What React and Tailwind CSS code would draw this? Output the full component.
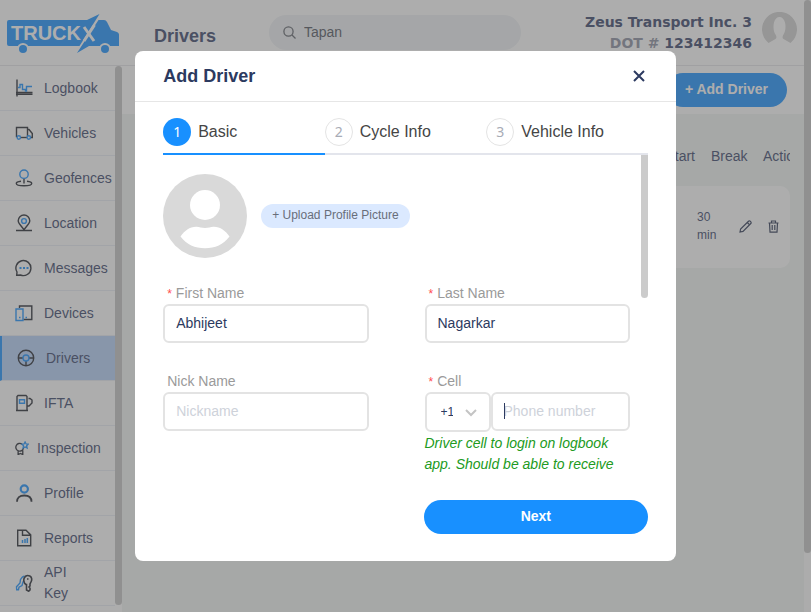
import React from "react";

const DARK = "#22262f";
const BLUE = "#1890ff";

function Icon({ size = 18, children }) {
  return (
    <svg width={size} height={size} viewBox="0 0 18 18" fill="none" stroke={DARK} strokeWidth="1.4" className="shrink-0" aria-hidden="true">
      {children}
    </svg>
  );
}

const icons = {
  logbook: (
    <Icon>
      <path d="M2 0.5v17M1 13.500h16.500M1 15.200h16.500" />
      <path d="M3 8.500h2V5.500h2.500v5h3v1.500h1V7.500H17" stroke={BLUE} />
    </Icon>
  ),
  vehicles: (
    <Icon>
      <path d="M2 12.500H1.500V3.500h11v9M12.500 5.500h1.500l3.300 4v4h-1.800" />
      <path d="M5.500 13.500h6.500" stroke={DARK} />
      <circle cx="3.800" cy="13.500" r="1.700" stroke={BLUE} />
      <circle cx="13.800" cy="13.500" r="1.700" stroke={BLUE} />
    </Icon>
  ),
  geofences: (
    <Icon>
      <path d="M9 9.500v5M6 12.300c-3 .300-4.700 1-4.700 2.200 0 1.300 3.200 2.200 7.700 2.200s7.700-.900 7.700-2.200c0-1.200-1.700-1.900-4.700-2.200" />
      <circle cx="9" cy="5.200" r="4.200" stroke={BLUE} />
    </Icon>
  ),
  location: (
    <Icon>
      <path d="M9 15.500C5.500 11.500 3.200 9.200 3.200 6.800a5.800 5.800 0 0 1 11.600 0c0 2.400-2.300 4.700-5.800 8.700zM1 16.500h16" />
      <circle cx="9" cy="7" r="2.400" stroke={BLUE} />
    </Icon>
  ),
  messages: (
    <Icon>
      <path d="M1.700 16.300L2 13A7.500 7.500 0 1 1 5.500 16z" />
      <path d="M4.500 9h2M8 9h2M11.500 9h2" stroke={BLUE} strokeWidth="2" />
    </Icon>
  ),
  devices: (
    <Icon>
      <path d="M4.500 4V2h12.300v13.500H8.500" />
      <path d="M1 5h7v11.500H1z" stroke={BLUE} />
      <path d="M4 13.500h1.500M10.500 13.500H12" stroke={BLUE} />
    </Icon>
  ),
  drivers: (
    <Icon>
      <circle cx="9" cy="9" r="7.700" />
      <path d="M1.500 9h4.500M12 9h4.500M9 12v4.500" />
      <circle cx="9" cy="9" r="3" stroke={BLUE} />
    </Icon>
  ),
  ifta: (
    <Icon>
      <path d="M2 16.500V2.500L3 1.500h8l1 1v14zM1 16.500h12M12 12h2l1.500-1.500L17 9V6l-2-1.500h-1.500" />
      <path d="M4.500 5.800h5v3.500h-5z" stroke={BLUE} />
    </Icon>
  ),
  inspection: (
    <Icon size={14}>
      <path d="M9 4A5 5 0 1 0 11 9M4 12v5.500l3-1.500 3 1.500V12" strokeWidth="1.700" />
      <path d="M13 1.200l1.300 2.600 2.700.300-2 2 .600 2.800L13 7.600l-2.600 1.300.600-2.800-2-2 2.700-.300z" stroke={BLUE} strokeWidth="1.700" />
    </Icon>
  ),
  profile: (
    <Icon>
      <path d="M2 17.800c0-4 2.500-6.300 7.300-6.300s7.200 2.300 7.200 6.300" strokeWidth="1.800" />
      <circle cx="9.300" cy="5" r="3.600" stroke={BLUE} strokeWidth="2.200" />
    </Icon>
  ),
  reports: (
    <Icon>
      <path d="M2.700 1.200h8.300l4.700 4.700v10.800h-13zM7.500 1.200v5h8" />
      <path d="M7.500 14v-3M10 14v-4M12.300 14V9" stroke={BLUE} strokeWidth="1.500" />
    </Icon>
  ),
  apiKey: (
    <Icon>
      <path d="M9 6.500L8 8l-1 3.500-3 1.700-.500 2.500H1.700l-.200-3L5 9l.500-3.500c1-2 2.500-3.300 4-3.500" stroke={BLUE} />
      <path d="M11 10.500C8.500 9 8.300 5.500 9.500 3.500S13 1.200 14.800 2s2.400 3.500 1.400 5.500l-1.200 2.500v2l-1 1 1 1v2l-1.300 1.200L11.500 16v-5.500zM12 5h1.500" strokeWidth="1.600" />
    </Icon>
  ),
};

const navItems = [
  { label: "Logbook", icon: "logbook" },
  { label: "Vehicles", icon: "vehicles" },
  { label: "Geofences", icon: "geofences" },
  { label: "Location", icon: "location" },
  { label: "Messages", icon: "messages" },
  { label: "Devices", icon: "devices" },
  { label: "Drivers", icon: "drivers", active: true },
  { label: "IFTA", icon: "ifta" },
  { label: "Inspection", icon: "inspection", compact: true },
  { label: "Profile", icon: "profile" },
  { label: "Reports", icon: "reports" },
  { label: "API Key", icon: "apiKey" },
];

function Logo() {
  return (
    <svg width="112" height="40" viewBox="7 14 112 40" className="shrink-0" role="img" aria-label="TruckX">
      <path d="M9 20h78l12.500-6-20 32H9a2 2 0 0 1-2-2V22a2 2 0 0 1 2-2z" fill={BLUE} />
      <path d="M98.500 20h5.500a4 4 0 0 1 3 2l4 8 6 2a3 3 0 0 1 2 3v11H89l-12 7z" fill={BLUE} />
      <text x="11" y="40" fontSize="20" fontWeight="700" fill="#fff" fontFamily="Liberation Sans, sans-serif">TRUCK</text>
      <path d="M84 27l10 14" stroke="#fff" strokeWidth="3" />
      <path d="M94.500 25L84 41" stroke="#fff" strokeWidth="3" />
      <circle cx="23" cy="49" r="6" fill="#fff" />
      <circle cx="105" cy="49" r="6" fill="#fff" />
      <circle cx="23" cy="49" r="4" fill={BLUE} />
      <circle cx="105" cy="49" r="4" fill={BLUE} />
    </svg>
  );
}

function Header() {
  return (
    <header className="flex h-[66px] items-start border-b border-[#e4e4e8] bg-white px-[7px]">
      <div className="pt-[14px]">
        <Logo />
      </div>
      <h1 className="mt-6 ml-[35px] w-[115px] text-lg leading-6 font-bold text-[#38446a]">Drivers</h1>
      <label className="mt-[15px] flex h-[35px] w-[252px] items-center gap-2 rounded-full bg-[#eef1f4] pl-[14px]">
        <svg width="13" height="13" viewBox="0 0 13 13" fill="none" stroke="#60646c" strokeWidth="1.3" aria-hidden="true">
          <circle cx="5.500" cy="5.500" r="4.600" />
          <path d="M9 9l3.500 3.500" />
        </svg>
        <input aria-label="Search drivers" defaultValue="Tapan" className="min-w-0 flex-1 bg-transparent pb-0.5 text-sm text-[#50555f] outline-none" />
      </label>
      <div className="mt-3 ml-auto text-right font-['DejaVu_Sans',sans-serif] text-sm leading-[21px] font-bold whitespace-nowrap text-[#38446a]">
        <div>Zeus Transport Inc. 3</div>
        <div>
          <span className="text-[#8a8fa0]">DOT #</span> 123412346
        </div>
      </div>
      <svg width="35" height="35" viewBox="0 0 35 35" className="mt-3 ml-[10px] shrink-0" aria-hidden="true">
        <path d="M6.500 31A17.500 17.500 0 1 1 28.500 31L21.500 27c-1.500-1-1-3 0-4.500 2-3 2.500-8 1.500-12C21.500 3 13.500 3 12 10.500c-1 4-.500 9 1.500 12 1 1.500 1.500 3.500 0 4.500z" fill="#d0d0d0" />
      </svg>
    </header>
  );
}

function Sidebar() {
  return (
    <aside className="relative w-[122px] shrink-0 bg-white pr-[7px]">
      <nav>
        {navItems.map((item) => (
          <a
            key={item.label}
            href="#"
            className={
              "flex h-[45px] items-center border-b border-[#e9edf4] pl-[15px] text-sm leading-[21px] text-[#38446a] " +
              (item.compact ? "gap-2 " : "gap-[11px] ") +
              (item.active ? "border-l-2 border-l-[#1890ff] bg-[#b5d0f8]" : "")
            }
          >
            {icons[item.icon]}
            <span className={item.label === "API Key" ? "w-8" : ""}>{item.label}</span>
          </a>
        ))}
      </nav>
      <div className="absolute top-0 right-0 h-[539px] w-[7px] rounded-full bg-[#c4c4c4]" />
    </aside>
  );
}

function DriverList() {
  return (
    <main className="flex min-w-0 flex-1 flex-col">
      <div className="flex h-12 items-center justify-end bg-white pr-[17px]">
        <button type="button" className="h-[34px] rounded-full bg-[#1890ff] px-[19px] pb-0.5 text-sm font-bold text-white">
          + Add Driver
        </button>
      </div>
      <div className="flex-1 bg-[#f1f5f3] pt-8 pr-[14px] pl-4">
        <table className="w-full table-fixed text-left text-[#38446a]">
          <thead>
            <tr className="h-10 align-top text-sm leading-5">
              <th className="pr-[2px] text-right font-normal">Start</th>
              <th className="w-[42px] pl-[14px] font-normal whitespace-nowrap">Break</th>
              <th className="w-[51px] overflow-hidden pl-6 font-normal">Action</th>
            </tr>
          </thead>
          <tbody>
            <tr className="h-[82px] text-xs leading-[18px]">
              <td className="rounded-l-[10px] bg-white" />
              <td className="bg-white pr-4 pb-0.5">30 min</td>
              <td className="rounded-r-[10px] bg-white pb-0.5">
                <div className="flex gap-4">
                  <button type="button" aria-label="Edit driver">
                    <svg width="13" height="13" viewBox="0 0 13 13" fill="none" stroke="#2c3754" strokeWidth="1.200">
                      <path d="M1 12l.600-3L9.500 1.200a1.200 1.200 0 0 1 1.700 0l.600.600a1.200 1.200 0 0 1 0 1.700L4 11.400zM8.300 2.500l2.300 2.300" />
                    </svg>
                  </button>
                  <button type="button" aria-label="Delete driver">
                    <svg width="11" height="13" viewBox="0 0 11 13" fill="none" stroke="#2c3754" strokeWidth="1.200">
                      <path d="M.500 3h10M3.500 3V1h4v2M1.500 3l.500 9.200h7L9.500 3M4.200 5v5M6.800 5v5" />
                    </svg>
                  </button>
                </div>
              </td>
            </tr>
          </tbody>
        </table>
      </div>
    </main>
  );
}

const steps = [
  { n: 1, label: "Basic", active: true },
  { n: 2, label: "Cycle Info" },
  { n: 3, label: "Vehicle Info" },
];

function Steps() {
  return (
    <ol className="grid grid-cols-3">
      {steps.map((s) => (
        <li
          key={s.n}
          className={"flex items-start gap-[7px] border-b-2 pb-[7px] " + (s.active ? "border-[#1890ff]" : "border-[#e3e5ec]")}
        >
          <span
            className={
              "flex size-7 items-center justify-center rounded-full font-['Noto_Sans',sans-serif] text-sm " +
              (s.active ? "bg-[#1890ff] text-white" : "border border-[#e4e4e4] text-[#a8acb6]")
            }
          >
            {s.n}
          </span>
          <span className="text-base leading-7 text-[#454545]">{s.label}</span>
        </li>
      ))}
    </ol>
  );
}

const inputClass =
  "h-[39px] w-full min-w-0 rounded-md border-2 border-[#e3e3e3] bg-white px-[11px] pb-0.5 text-sm text-[#2c3a60] outline-none placeholder:text-[#ced2da]";

function Label({ htmlFor, required, children }) {
  return (
    <label htmlFor={htmlFor} className="block pl-1 text-sm leading-[22px] text-[#9a9a9a]">
      {required && <span className="mr-1 text-xs text-[#ff4d4f]">*</span>}
      {children}
    </label>
  );
}

function AddDriverDialog() {
  return (
    <div role="dialog" aria-modal="true" aria-labelledby="dialog-title" className="w-2/3 rounded-lg bg-white">
      <div className="flex h-[51px] items-center justify-between border-b border-[#e6e6e6] px-7">
        <h2 id="dialog-title" className="text-lg font-bold text-[#2c3a60]">Add Driver</h2>
        <button type="button" aria-label="Close" className="mr-[3px]">
          <svg width="12" height="12" viewBox="0 0 12 12" fill="none" stroke="#2c3a60" strokeWidth="2">
            <path d="M1 1l10 10M11 1L1 11" />
          </svg>
        </button>
      </div>
      <div className="px-7 pt-4 pb-[27px]">
        <Steps />
        <div className="relative h-[325px] overflow-hidden pt-[19px] pr-[18px]">
          <div className="absolute top-0 right-0 h-[143px] w-[7px] rounded-b-full bg-[#cbcbcb]" />
          <div className="flex items-center gap-[14px]">
            <svg width="84" height="84" viewBox="0 0 84 84" aria-hidden="true">
              <circle cx="42" cy="42" r="42" fill="#d9d9d9" />
              <circle cx="42" cy="31" r="15" fill="#fff" />
              <path d="M17.500 62.500c4-6 9.500-10 16-9.800 3 .100 5 1.300 8.500 1.300s5.500-1.200 8.500-1.300c6.500-.200 12 3.800 16 9.800-6 8-14.500 11.800-24.500 11.800S23.500 70.500 17.500 62.500z" fill="#fff" />
            </svg>
            <button type="button" className="h-6 rounded-full bg-[#dbe9ff] px-[11px] pb-0.5 text-xs text-[#686e7a]">
              + Upload Profile Picture
            </button>
          </div>
          <form className="mt-6 grid grid-cols-2 gap-x-14 gap-y-[27px]">
            <div>
              <Label htmlFor="first" required>First Name</Label>
              <input id="first" defaultValue="Abhijeet" className={inputClass} />
            </div>
            <div>
              <Label htmlFor="last" required>Last Name</Label>
              <input id="last" defaultValue="Nagarkar" className={inputClass} />
            </div>
            <div>
              <Label htmlFor="nick">Nick Name</Label>
              <input id="nick" placeholder="Nickname" className={inputClass} />
            </div>
            <div>
              <Label htmlFor="phone" required>Cell</Label>
              <div className="flex items-start">
                <div className="relative w-[66px] shrink-0">
                  <select aria-label="Country code" className="h-10 w-full appearance-none rounded-md border-2 border-[#e3e3e3] bg-white pr-9 pl-[14px] text-xs text-[#2c3a60] outline-none">
                    <option>+1</option>
                  </select>
                  <svg width="12" height="8" viewBox="0 0 12 8" fill="none" stroke="#c4c4c4" strokeWidth="2" className="pointer-events-none absolute top-[17px] right-[14px]" aria-hidden="true">
                    <path d="M1 1l5 5 5-5" />
                  </svg>
                </div>
                <div className="relative min-w-0 flex-1">
                  <input id="phone" placeholder="Phone number" className={inputClass} />
                  <span className="absolute top-[11px] left-[13px] h-4 w-px bg-[#2c3a60]" />
                </div>
              </div>
              <p className="pt-px text-sm leading-[21px] text-[#219a21] italic">
                Driver cell to login on logbook app. Should be able to receive
              </p>
            </div>
          </form>
        </div>
        <div className="mt-5 flex justify-end">
          <button type="button" className="h-[34px] w-56 rounded-full bg-[#1890ff] pb-0.5 text-sm font-bold text-white">
            Next
          </button>
        </div>
      </div>
    </div>
  );
}

export default function App() {
  return (
    <div className="flex h-screen overflow-hidden bg-[#fcfcfc] font-['Liberation_Sans',Arial,sans-serif]">
      <div className="flex min-w-0 flex-1 flex-col">
        <Header />
        <div className="flex min-h-0 flex-1 overflow-hidden">
          <Sidebar />
          <DriverList />
        </div>
      </div>
      <div className="w-[7px] shrink-0">
        <div className="h-[553px] rounded-full bg-[#c4c4c4]" />
      </div>
      <div className="fixed inset-0 flex items-center justify-center bg-[#5c5c5c]/50">
        <AddDriverDialog />
      </div>
    </div>
  );
}
